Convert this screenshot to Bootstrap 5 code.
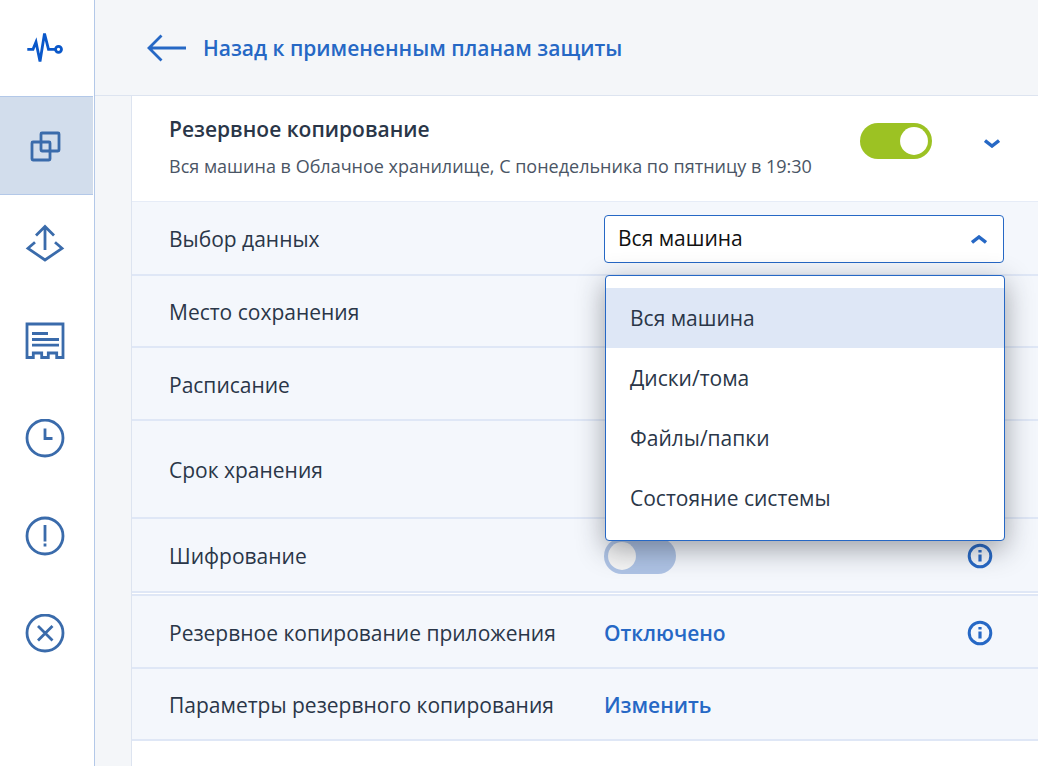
<!DOCTYPE html>
<html lang="ru">
<head>
  <meta charset="UTF-8"/>
  <meta name="viewport" content="width=device-width, initial-scale=1.0"/>
  <title>Резервное копирование</title>
  <link href="https://cdn.jsdelivr.net/npm/bootstrap@5.3.0/dist/css/bootstrap.min.css" rel="stylesheet"/>
  <style>
    html, body { height: 100%; overflow: hidden; }
    body {
      background-color: #f4f6f9;
      color: #2a3648;
      font-family: "Open Sans", "Noto Sans", sans-serif;
      font-size: 21px;
      line-height: 28px;
    }
    .page-wrap { height: 766px; }

    /* left icon rail */
    .icon-rail {
      width: 95px;
      flex: none;
      background: #fff;
      border-right: 1px solid #b3c8e8;
    }
    .rail-item {
      height: 97px;
      padding: 29px 0 0 25px;
      color: #3a6bab;
    }
    .rail-item:nth-child(even) { height: 98px; }
    .rail-item.active,
    .rail-item.active:hover {
      height: 99px;
      margin-top: -1px;
      margin-right: 1px;
      background: #d2ddec;
      border-top: 1px solid #b3c8e8;
      border-bottom: 1px solid #b3c8e8;
      color: #3a6bab;
    }
    .rail-item svg { display: block; width: 40px; height: 40px; fill: none; stroke: currentColor; stroke-width: 2.8; }

    /* back link bar */
    .back-bar {
      height: 96px;
      padding-left: 52px;
      gap: 16px;
      border-bottom: 1px solid #dde4f0;
    }
    .back-bar svg { width: 40px; height: 28px; fill: none; stroke: #2668c5; stroke-width: 2.8; }
    .back-link { color: #2668c5; font-weight: 600; text-decoration: none; }

    /* plan panel */
    .plan-panel {
      margin-left: 36px;
      background: #fff;
      border-left: 1px solid #dde4f0;
      height: 670px;
    }
    .plan-head {
      height: 106px;
      padding: 19px 38px 0 37px;
      border-bottom: 1px solid #e6ecf7;
    }
    .plan-title { font-weight: 600; line-height: 28px; }
    .plan-sub { font-size: 18px; line-height: 24px; margin-top: 11px; color: #4a5565; }
    .plan-row {
      padding: 2px 34px 0 37px;
      background: #f4f7fc;
      border-bottom: 2px solid #dfe7f6;
    }
    .row-label { width: 435px; flex: none; }
    .row-value { flex: 1; }
    .row-join { border-top: 2px solid #dfe7f6; margin-top: 1px; }
    .rh-72 { height: 72px; }
    .rh-73 { height: 73px; }
    .rh-74 { height: 74px; }
    .rh-75 { height: 75px; }
    .rh-98 { height: 98px; }
    .val-link { color: #2668c5; font-weight: 600; text-decoration: none; }

    .head-switch { margin-top: 8px; gap: 52px; }
    .chev { width: 16px; height: 9px; fill: none; stroke: #2668c5; stroke-width: 3.4; }
    .head-switch .chev { margin-top: 5px; }
    .info-ico { width: 26px; height: 26px; margin-right: 11px; fill: none; stroke: #2668c5; stroke-width: 3; }

    /* switches */
    .form-switch.plan-switch { padding: 0; margin: 0; min-height: 0; display: flex; }
    .form-switch.plan-switch .form-check-input {
      width: 72px;
      height: 36px;
      margin: 0;
      border: 0;
      border-radius: 18px;
      background-color: #aec3e5;
      background-image: url("data:image/svg+xml,%3csvg xmlns='http://www.w3.org/2000/svg' viewBox='-4 -4 8 8'%3e%3ccircle r='3.1' fill='%23f5f5f5'/%3e%3c/svg%3e");
    }
    .form-switch.plan-switch .form-check-input:checked {
      background-color: #9cc223;
      background-image: url("data:image/svg+xml,%3csvg xmlns='http://www.w3.org/2000/svg' viewBox='-4 -4 8 8'%3e%3ccircle r='3.1' fill='%23fff'/%3e%3c/svg%3e");
    }

    /* data picker */
    .data-select {
      position: relative;
      width: 400px;
    }
    .select-btn {
      width: 100%;
      height: 48px;
      padding: 0 16px 0 13px;
      background: #fff;
      border: 1px solid #2668c5;
      border-radius: 4px;
      color: #111;
      font-size: 21px;
    }
    .select-btn:hover, .select-btn:active { background: #fff; border-color: #2668c5; color: #111; }
    .data-menu {
      left: 1px;
      top: 60px;
      width: 400px;
      padding: 12px 0;
      border: 1px solid #2668c5;
      border-radius: 4px;
      box-shadow: 0 8px 28px rgba(30, 35, 45, .42);
      font-size: 21px;
    }
    .data-menu .dropdown-item {
      height: 60px;
      line-height: 60px;
      padding: 0 24px;
      color: #2a3648;
    }
    .data-menu .dropdown-item.active { background: #dee7f6; color: #2a3648; }
  </style>
</head>
<body>

<div class="d-flex page-wrap">
  <!-- sidebar -->
  <nav class="icon-rail nav flex-column flex-nowrap">
    <a class="rail-item nav-link" href="#">
      <svg viewBox="25 29 40 40"><path d="M27.3 49.3H33L36 42l4 19.5 4.500-28 4 15.800H55"/><circle cx="58.500" cy="49.300" r="3"/></svg>
    </a>
    <a class="rail-item nav-link active" href="#">
      <svg viewBox="25 126 40 40"><rect x="41" y="133" width="18" height="18" rx="1"/><rect x="32" y="142" width="18" height="18" rx="1"/></svg>
    </a>
    <a class="rail-item nav-link" href="#">
      <svg viewBox="25 224 40 40"><path d="M45 250V227M36 235.500l9-9 9 9M35 242.300l-7 6 17 11.700 17-11.700-7-6"/></svg>
    </a>
    <a class="rail-item nav-link" href="#">
      <svg viewBox="25 321 40 40"><path d="M27 324h36v33.500h-6.300v-4.500h-8.400v4.500h-6.600v-4.500H33.300v4.500H27z"/><path d="M32 333.500h16M32 339.500h27M32 345.200h27"/></svg>
    </a>
    <a class="rail-item nav-link" href="#">
      <svg viewBox="25 419 40 40"><circle cx="45" cy="438" r="18"/><path d="M45 428.500v10h7.500"/></svg>
    </a>
    <a class="rail-item nav-link" href="#">
      <svg viewBox="25 516 40 40"><circle cx="45" cy="536" r="18"/><path d="M45 525v16.500M45 543.500v3"/></svg>
    </a>
    <a class="rail-item nav-link" href="#">
      <svg viewBox="25 614 40 40"><circle cx="45" cy="633" r="18"/><path d="M38 626l14.500 14.500M52.500 626L38 640.500"/></svg>
    </a>
  </nav>

  <main class="flex-grow-1">
    <div class="back-bar d-flex align-items-center">
      <svg viewBox="0 0 40 28"><path d="M39 14H2M14.500 1.500L2 14l12.500 12.500"/></svg>
      <a class="back-link" href="#">Назад к примененным планам защиты</a>
    </div>

    <div class="plan-panel">
      <div class="plan-head d-flex justify-content-between align-items-start">
        <div>
          <div class="plan-title">Резервное копирование</div>
          <div class="plan-sub">Вся машина в Облачное хранилище, С понедельника по пятницу в 19:30</div>
        </div>
        <div class="head-switch d-flex align-items-center">
          <div class="form-check form-switch plan-switch">
            <input class="form-check-input" type="checkbox" role="switch" checked/>
          </div>
          <svg class="chev" viewBox="0 0 16 9"><path d="M1 1.500l7 5.500 7-5.500"/></svg>
        </div>
      </div>

      <div class="plan-row rh-74 d-flex align-items-center">
        <div class="row-label">Выбор данных</div>
        <div class="row-value">
          <div class="data-select dropdown">
            <button class="select-btn btn d-flex align-items-center justify-content-between" type="button">
              Вся машина
              <svg class="chev" viewBox="0 0 16 9"><path d="M1 7.500l7-5.500 7 5.500"/></svg>
            </button>
            <ul class="data-menu dropdown-menu show">
              <li><a class="dropdown-item active" href="#">Вся машина</a></li>
              <li><a class="dropdown-item" href="#">Диски/тома</a></li>
              <li><a class="dropdown-item" href="#">Файлы/папки</a></li>
              <li><a class="dropdown-item" href="#">Состояние системы</a></li>
            </ul>
          </div>
        </div>
      </div>
      <div class="plan-row rh-72 d-flex align-items-center"><div class="row-label">Место сохранения</div></div>
      <div class="plan-row rh-73 d-flex align-items-center"><div class="row-label">Расписание</div></div>
      <div class="plan-row rh-98 d-flex align-items-center"><div class="row-label">Срок хранения</div></div>
      <div class="plan-row rh-74 d-flex align-items-center">
        <div class="row-label">Шифрование</div>
        <div class="row-value d-flex align-items-center justify-content-between">
          <div class="form-check form-switch plan-switch">
            <input class="form-check-input" type="checkbox" role="switch"/>
          </div>
          <svg class="info-ico" viewBox="0 0 26 26"><circle cx="13" cy="13" r="10.800"/><path d="M13 11.500v7M13 7v2.500" stroke-width="3.200"/></svg>
        </div>
      </div>
      <div class="plan-row row-join rh-75 d-flex align-items-center">
        <div class="row-label">Резервное копирование приложения</div>
        <div class="row-value d-flex align-items-center justify-content-between">
          <a class="val-link" href="#">Отключено</a>
          <svg class="info-ico" viewBox="0 0 26 26"><circle cx="13" cy="13" r="10.800"/><path d="M13 11.500v7M13 7v2.500" stroke-width="3.200"/></svg>
        </div>
      </div>
      <div class="plan-row rh-72 d-flex align-items-center">
        <div class="row-label">Параметры резервного копирования</div>
        <div class="row-value"><a class="val-link" href="#">Изменить</a></div>
      </div>
    </div>
  </main>
</div>

<script src="https://cdn.jsdelivr.net/npm/bootstrap@5.3.0/dist/js/bootstrap.bundle.min.js"></script>
</body>
</html>
